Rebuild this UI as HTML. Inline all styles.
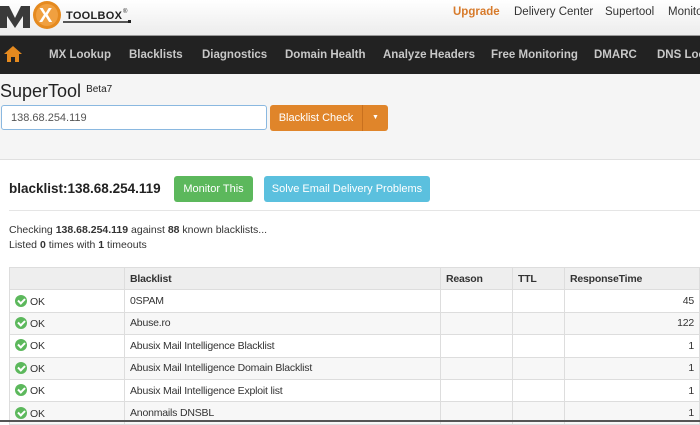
<!DOCTYPE html>
<html><head><style>
*{margin:0;padding:0;box-sizing:border-box}
body{width:700px;height:422px;overflow:hidden;font-family:"Liberation Sans",Arial,sans-serif;background:#fff;position:relative;color:#333}
.top{position:absolute;left:0;top:0;width:700px;height:35px;background:linear-gradient(#fff,#ececec)}
.toplinks{position:absolute;top:6px;font-size:11.5px;color:#333;white-space:nowrap}
.nav{position:absolute;left:0;top:35px;width:700px;height:39px;background:#222;border-top:1px solid #999;overflow:hidden}
.nav span{position:absolute;top:13px;font-size:11.5px;font-weight:bold;color:#c8c8c8;white-space:nowrap}
.gray{position:absolute;left:0;top:74px;width:700px;height:86px;background:#f5f5f5;border-bottom:1px solid #e0e0e0}
.btn{position:absolute;border-radius:3px;color:#fff;font-size:11px;text-align:center;white-space:nowrap}
table{position:absolute;left:9px;top:267px;width:691px;border-collapse:collapse;font-size:10.5px;letter-spacing:-0.2px}
td,th{border:1px solid #ddd;height:22.4px;padding:0 5px;text-align:left}
th{background:#eee;font-weight:bold;color:#333}
tr:nth-child(odd) td{background:#f7f7f7}
.ck{display:inline-block;width:12px;height:12px;border-radius:50%;background:#5cb85c;vertical-align:-2px;margin-right:3px;position:relative}
.ck:after{content:"";position:absolute;left:3.5px;top:2px;width:3px;height:5px;border:solid #fff;border-width:0 2px 2px 0;transform:rotate(45deg)}
.r{text-align:right}
</style></head><body>
<div class="top">
 <svg width="140" height="32" style="position:absolute;left:0;top:0">
  <polygon points="0,6 9,6 15,18 21,6 30,6 30,28 23,28 23,16 15,28 7,16 7,28 0,28" fill="#3a3a3a"/>
  <circle cx="47" cy="15" r="14" fill="#e58a1f"/><circle cx="47" cy="15" r="11" fill="#f0a040"/>
  <text x="39" y="22" font-family="Liberation Sans" font-weight="bold" font-size="20" fill="#fff">X</text>
  <text x="66" y="19" font-family="Liberation Sans" font-weight="bold" font-size="11" fill="#222" textLength="56">TOOLBOX</text>
  <text x="123" y="13" font-size="6" fill="#222">®</text>
  <line x1="63" y1="22" x2="130" y2="22" stroke="#222" stroke-width="1.5"/><rect x="128" y="20" width="3" height="3" fill="#222"/>
 </svg>
 <span class="toplinks" style="left:453px;color:#d77a2a;font-weight:bold">Upgrade</span>
 <span class="toplinks" style="left:514px">Delivery Center</span>
 <span class="toplinks" style="left:605px">Supertool</span>
 <span class="toplinks" style="left:668px">Monitoring</span>
</div>
<div class="nav">
 <svg width="20" height="18" style="position:absolute;left:3px;top:9px"><polygon points="10,1 19,9 16,9 16,17 12,17 12,12 8,12 8,17 4,17 4,9 1,9" fill="#e58a1f"/></svg>
 <span style="left:49px">MX Lookup</span><span style="left:129px">Blacklists</span><span style="left:202px">Diagnostics</span><span style="left:285px">Domain Health</span><span style="left:383px">Analyze Headers</span><span style="left:491px">Free Monitoring</span><span style="left:594px">DMARC</span><span style="left:657px">DNS Lookup</span>
</div>
<div class="gray">
 <div style="position:absolute;left:0;top:7px;font-size:18px;color:#222">SuperTool <span style="font-size:10px;vertical-align:5px">Beta7</span></div>
 <div style="position:absolute;left:1px;top:31px;width:266px;height:25px;background:#fff;border:1px solid #8ab8e0;border-radius:3px;font-size:11px;color:#555;padding:6px 9px">138.68.254.119</div>
 <div class="btn" style="left:270px;top:31px;width:92px;height:26px;background:#e0852a;padding-top:7px;border-radius:3px 0 0 3px">Blacklist Check</div>
 <div class="btn" style="left:362px;top:31px;width:26px;height:26px;background:#e0852a;border-left:1px solid #c8701e;border-radius:0 3px 3px 0;font-size:7px;padding-top:9px">▼</div>
</div>
<div style="position:absolute;left:9px;top:181px;font-size:13.5px;font-weight:bold;color:#222">blacklist:138.68.254.119</div>
<div class="btn" style="left:174px;top:176px;width:79px;height:26px;background:#5cb85c;padding-top:7px">Monitor This</div>
<div class="btn" style="left:264px;top:176px;width:166px;height:26px;background:#5bc0de;padding-top:7px">Solve Email Delivery Problems</div>
<div style="position:absolute;left:9px;top:210px;width:691px;border-top:1px solid #e5e5e5"></div>
<div style="position:absolute;left:9px;top:223px;font-size:10.5px;line-height:15px;color:#333">Checking <b>138.68.254.119</b> against <b>88</b> known blacklists...<br>Listed <b>0</b> times with <b>1</b> timeouts</div>
<table>
<tr><th style="width:115px"></th><th style="width:316px">Blacklist</th><th style="width:72px">Reason</th><th style="width:52px">TTL</th><th>ResponseTime</th></tr>
<tr><td><span class="ck"></span>OK</td><td>0SPAM</td><td></td><td></td><td class="r">45</td></tr>
<tr><td><span class="ck"></span>OK</td><td>Abuse.ro</td><td></td><td></td><td class="r">122</td></tr>
<tr><td><span class="ck"></span>OK</td><td>Abusix Mail Intelligence Blacklist</td><td></td><td></td><td class="r">1</td></tr>
<tr><td><span class="ck"></span>OK</td><td>Abusix Mail Intelligence Domain Blacklist</td><td></td><td></td><td class="r">1</td></tr>
<tr><td><span class="ck"></span>OK</td><td>Abusix Mail Intelligence Exploit list</td><td></td><td></td><td class="r">1</td></tr>
<tr><td><span class="ck"></span>OK</td><td>Anonmails DNSBL</td><td></td><td></td><td class="r">1</td></tr>
</table>
<div style="position:absolute;left:0;top:420px;width:700px;height:2px;background:#555"></div>
</body></html>
